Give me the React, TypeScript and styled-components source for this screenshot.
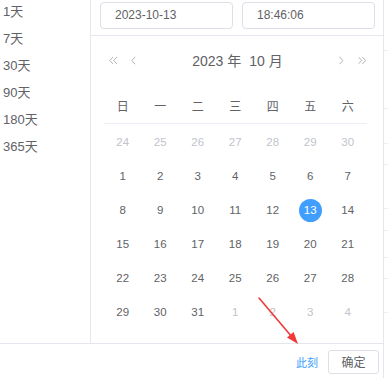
import * as React from 'react';
import styled, { createGlobalStyle } from 'styled-components';

const GlobalStyle = createGlobalStyle`
  html, body {
    margin: 0;
    padding: 0;
    background: #fff;
  }
  body {
    width: 388px;
    height: 378px;
    overflow: hidden;
    font-family: "Liberation Sans", "Noto Sans CJK SC", sans-serif;
  }
`;

const Page = styled.div`
  position: relative;
  display: flex;
  width: 388px;
  height: 378px;
  background: #fff;
`;

const Panel = styled.div`
  width: 384px;
  height: 378px;
  box-sizing: border-box;
  border-right: 1px solid #e4e7ed;
  display: flex;
  flex-direction: column;
  background: #fff;
`;

const Body = styled.div`
  display: flex;
  height: 343px;
`;

const Sidebar = styled.ul`
  width: 91px;
  box-sizing: border-box;
  border-right: 1px solid #e4e7ed;
  margin: 0;
  padding: 0 0 0 3px;
  list-style: none;
  overflow: hidden;
`;

const Shortcut = styled.li<{ $first?: boolean }>`
  font-size: 13px;
  line-height: 27px;
  color: #606266;
  margin-top: ${({ $first }) => ($first ? '-2px' : '0')};
  cursor: pointer;
`;

const Content = styled.div`
  flex: 1;
  display: flex;
  flex-direction: column;
`;

const TimeHeader = styled.div`
  height: 36px;
  box-sizing: border-box;
  border-bottom: 1px solid #e4e7ed;
  padding: 2px 8px 0 9px;
  display: flex;
  gap: 9px;
`;

const Input = styled.div`
  flex: 1;
  height: 27px;
  box-sizing: border-box;
  border: 1px solid #dcdfe6;
  border-radius: 4px;
  padding: 0 14px;
  font-size: 12px;
  line-height: 25px;
  color: #606266;
`;

const Nav = styled.div`
  height: 48px;
  display: flex;
  align-items: center;
  padding: 0 17px 0 18px;
`;

const NavGroup = styled.div<{ $right?: boolean }>`
  width: 27px;
  display: flex;
  align-items: center;
  justify-content: ${({ $right }) => ($right ? 'flex-end' : 'flex-start')};
  gap: 14px;
`;

const NavBtn = styled.svg`
  display: block;
  fill: none;
  stroke: #a8abb2;
  stroke-width: 1;
`;

const Title = styled.div`
  flex: 1;
  text-align: center;
  font-size: 14px;
  color: #606266;
  span + span {
    margin-left: 8px;
  }
`;

const Table = styled.div`
  padding: 7px 0 0 13px;
  width: 262.5px;
`;

const WeekRow = styled.div`
  display: grid;
  grid-template-columns: repeat(7, 37.5px);
  height: 33px;
  box-sizing: border-box;
  border-bottom: 1px solid #ebeef5;
  margin-bottom: 1px;
`;

const WeekCell = styled.div`
  font-size: 12px;
  line-height: 32px;
  text-align: center;
  color: #606266;
`;

const DateGrid = styled.div`
  display: grid;
  grid-template-columns: repeat(7, 37.5px);
  grid-auto-rows: 34px;
`;

const DateCell = styled.div`
  display: flex;
  align-items: center;
  justify-content: center;
`;

const Day = styled.span<{ $muted?: boolean; $current?: boolean }>`
  width: 23px;
  height: 23px;
  border-radius: 50%;
  display: flex;
  align-items: center;
  justify-content: center;
  font-size: 11.5px;
  color: ${({ $muted, $current }) => ($current ? '#fff' : $muted ? '#c0c4cc' : '#606266')};
  background: ${({ $current }) => ($current ? '#409eff' : 'transparent')};
`;

const Footer = styled.div`
  height: 35px;
  box-sizing: border-box;
  border-top: 1px solid #e4e7ed;
  display: flex;
  align-items: center;
  justify-content: flex-end;
  gap: 10px;
  padding: 1px 4px 0 0;
`;

const TextButton = styled.span`
  font-size: 11px;
  color: #409eff;
  cursor: pointer;
`;

const Button = styled.button`
  width: 51px;
  height: 24px;
  box-sizing: border-box;
  border: 1px solid #dcdfe6;
  border-radius: 3px;
  background: #fff;
  font-family: inherit;
  font-size: 12px;
  color: #606266;
  padding: 0;
`;

const Backdrop = styled.div`
  flex: 1;
  display: flex;
  flex-direction: column;
  background: #fff;
`;

const BackRow = styled.div`
  box-sizing: border-box;
  border-bottom: 1px solid #ebeef5;
`;

const Annotation = styled.svg`
  position: absolute;
  left: 0;
  top: 0;
  pointer-events: none;
`;

const shortcuts = ['1天', '7天', '30天', '90天', '180天', '365天'];
const weekdays = ['日', '一', '二', '三', '四', '五', '六'];
const backRows = [51, 58, 35, 21, 44, 22, 27, 21, 34];

const buildDays = () => {
  const days: { n: number; muted: boolean }[] = [];
  for (let d = 24; d <= 30; d++) days.push({ n: d, muted: true });
  for (let d = 1; d <= 31; d++) days.push({ n: d, muted: false });
  for (let d = 1; d <= 4; d++) days.push({ n: d, muted: true });
  return days;
};

const Single = ({ flip }: { flip?: boolean }) => (
  <NavBtn width="5" height="9" viewBox="0 0 5 9" style={flip ? { transform: 'scaleX(-1)' } : undefined}>
    <path d="M4.5 0.5 L0.8 4.5 L4.5 8.5" />
  </NavBtn>
);

const Double = ({ flip }: { flip?: boolean }) => (
  <NavBtn width="9" height="9" viewBox="0 0 9 9" style={flip ? { transform: 'scaleX(-1)' } : undefined}>
    <path d="M4.3 0.8 L0.8 4.5 L4.3 8.2 M8.5 0.8 L5 4.5 L8.5 8.2" />
  </NavBtn>
);

export default function App() {
  const days = buildDays();
  return (
    <>
      <GlobalStyle />
      <Page>
        <Panel>
          <Body>
            <Sidebar>
              {shortcuts.map((s, i) => (
                <Shortcut key={s} $first={i === 0}>{s}</Shortcut>
              ))}
            </Sidebar>
            <Content>
              <TimeHeader>
                <Input>2023-10-13</Input>
                <Input>18:46:06</Input>
              </TimeHeader>
              <Nav>
                <NavGroup>
                  <Double />
                  <Single />
                </NavGroup>
                <Title>
                  <span>2023 年</span>
                  <span>10 月</span>
                </Title>
                <NavGroup $right>
                  <Single flip />
                  <Double flip />
                </NavGroup>
              </Nav>
              <Table>
                <WeekRow>
                  {weekdays.map(w => (
                    <WeekCell key={w}>{w}</WeekCell>
                  ))}
                </WeekRow>
                <DateGrid>
                  {days.map((d, i) => (
                    <DateCell key={i}>
                      <Day $muted={d.muted} $current={!d.muted && d.n === 13}>{d.n}</Day>
                    </DateCell>
                  ))}
                </DateGrid>
              </Table>
            </Content>
          </Body>
          <Footer>
            <TextButton>此刻</TextButton>
            <Button>确定</Button>
          </Footer>
        </Panel>
        <Backdrop>
          {backRows.map((h, i) => (
            <BackRow key={i} style={{ height: h }} />
          ))}
        </Backdrop>
        <Annotation width="388" height="378" viewBox="0 0 388 378">
          <line x1="259" y1="298" x2="292" y2="337" stroke="#f03a3a" strokeWidth="1.6" strokeLinecap="round" />
          <polygon points="298,344 287,337.6 293.6,332" fill="#f03a3a" />
        </Annotation>
      </Page>
    </>
  );
}
